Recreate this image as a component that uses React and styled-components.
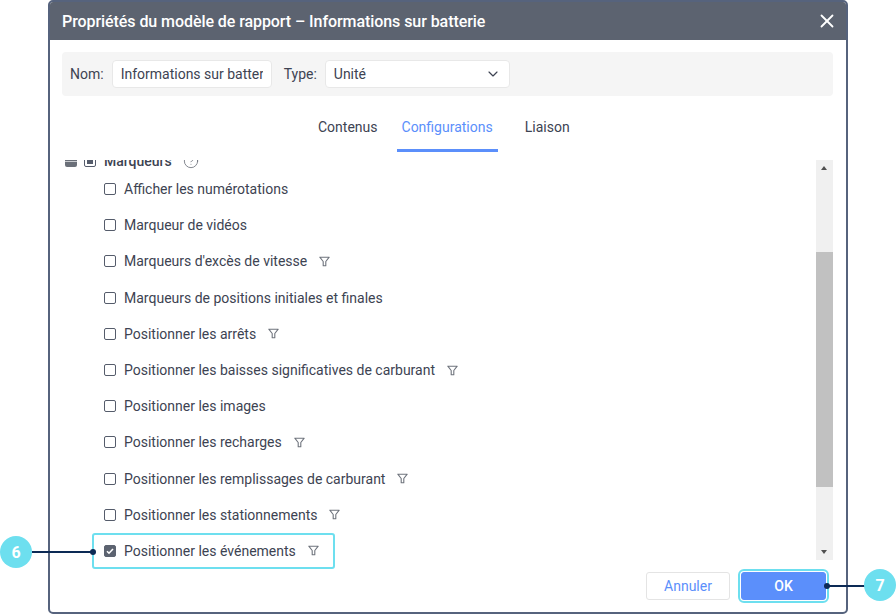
import React from 'react';
import styled, { createGlobalStyle } from 'styled-components';
import { ChevronDown, CircleHelp, X } from 'lucide-react';

const GlobalStyle = createGlobalStyle`
  html, body {
    margin: 0;
    padding: 0;
    background: #fff;
    overflow: hidden;
  }
  * {
    box-sizing: border-box;
  }
`;

const Page = styled.div`
  position: relative;
  width: 896px;
  height: 614px;
  padding-left: 48px;
  font-family: Roboto, "Liberation Sans", sans-serif;
  font-size: 14px;
  color: #3d4352;
`;

const Dialog = styled.div`
  display: flex;
  flex-direction: column;
  width: 800px;
  height: 614px;
  background: #fff;
  border: 2px solid #56637d;
  border-radius: 5px;
  overflow: hidden;
`;

const Header = styled.div`
  display: flex;
  align-items: center;
  justify-content: space-between;
  height: 38px;
  padding: 0 8px 0 12px;
  background: #5c6370;
  color: #fff;
`;

const Title = styled.div`
  font-size: 16px;
  font-weight: 500;
  letter-spacing: -0.07px;
`;

const FieldsBar = styled.div`
  display: flex;
  align-items: center;
  height: 44px;
  margin: 12px 13px 0 12px;
  padding: 0 8px;
  background: #f5f5f5;
  border-radius: 4px;
`;

const FieldLabel = styled.label`
  margin-right: 8px;
`;

const TextInput = styled.input`
  width: 160px;
  height: 28px;
  margin-right: 12px;
  padding: 0 8px;
  font: inherit;
  color: inherit;
  background: #fff;
  border: 1px solid #e8e8e8;
  border-radius: 4px;
  outline: none;
`;

const SelectBox = styled.div`
  display: flex;
  align-items: center;
  justify-content: space-between;
  width: 185px;
  height: 28px;
  padding: 0 8px;
  background: #fff;
  border: 1px solid #e8e8e8;
  border-radius: 4px;
`;

const Tabs = styled.div`
  display: flex;
  gap: 14px;
  margin-top: 23px;
  padding-left: 263px;
`;

const Tab = styled.div`
  padding: 0 5px 14px;
  line-height: 16px;
  color: ${(p) => (p.$active ? '#5b8ffb' : '#3d4352')};
  border-bottom: 3px solid ${(p) => (p.$active ? '#5b8ffb' : 'transparent')};

  &:last-child {
    margin-left: 8px;
  }
`;

const Main = styled.div`
  display: flex;
  height: 410px;
  margin: 8px 13px 0 12px;
`;

const List = styled.div`
  flex: 1;
  overflow: hidden;
`;

const GroupRow = styled.div`
  display: flex;
  align-items: center;
  height: 20px;
  margin-top: -9px;
  padding-left: 3px;
  font-weight: 500;
`;

const ExpandBox = styled.span`
  position: relative;
  width: 12px;
  height: 12px;
  margin-right: 7px;
  background: #6b7079;
  border-radius: 2px;

  &::after {
    content: '';
    position: absolute;
    left: 0;
    right: 0;
    top: 6px;
    height: 1px;
    background: #c9cbcf;
  }
`;

const PartialBox = styled.span`
  display: flex;
  align-items: center;
  justify-content: center;
  width: 12px;
  height: 12px;
  margin-right: 8px;
  border: 1px solid #555c6b;
  border-radius: 2px;

  &::after {
    content: '';
    width: 6px;
    height: 6px;
    background: #555c6b;
  }
`;

const HelpIcon = styled(CircleHelp)`
  margin-left: 11px;
  color: #666b75;
`;

const Row = styled.div`
  display: flex;
  align-items: center;
  height: 36.2px;
  padding-left: 42px;
  ${(p) =>
    p.$highlight &&
    `
    width: fit-content;
    margin-left: 30px;
    padding: 0 14px 0 10px;
    border: 2px solid #6ddfef;
    border-radius: 3px;
  `}
`;

const CheckBox = styled.span`
  display: flex;
  align-items: center;
  justify-content: center;
  width: 12px;
  height: 12px;
  margin-right: 8px;
  background: ${(p) => (p.$checked ? '#5c6370' : '#fff')};
  border: 1px solid ${(p) => (p.$checked ? '#5c6370' : '#555c6b')};
  border-radius: 2px;
`;

const FilterSvg = styled.svg`
  flex: none;
  width: 11px;
  height: 11px;
  margin-left: 12px;
  color: #6f747d;
`;

const Track = styled.div`
  position: relative;
  display: grid;
  grid-template-rows: 92px 235px 1fr;
  width: 17px;
  height: 400px;
  background: #f0f0f0;
`;

const Thumb = styled.div`
  grid-row: 2;
  background: #c1c1c1;
`;

const Arrow = styled.span`
  position: absolute;
  left: 5px;
  ${(p) => (p.$down ? 'bottom: 6px;' : 'top: 6px;')}
  width: 0;
  height: 0;
  border-left: 3.5px solid transparent;
  border-right: 3.5px solid transparent;
  ${(p) => (p.$down ? 'border-top' : 'border-bottom')}: 4px solid #505050;
`;

const Footer = styled.div`
  display: flex;
  justify-content: flex-end;
  gap: 11px;
  margin-top: 2px;
  padding-right: 20px;
`;

const Button = styled.button`
  width: ${(p) => (p.$primary ? '85px' : '84px')};
  height: 28px;
  padding: 0;
  font: inherit;
  font-weight: ${(p) => (p.$primary ? 500 : 400)};
  color: ${(p) => (p.$primary ? '#fff' : '#5b8ffb')};
  background: ${(p) => (p.$primary ? '#5b8ffb' : '#fff')};
  border: 1px solid ${(p) => (p.$primary ? '#5b8ffb' : '#e4e4e4')};
  border-radius: 3px;
  ${(p) => p.$primary && 'outline: 2px solid #6ddfef; outline-offset: 1px;'}
`;

const Badge = styled.div`
  position: absolute;
  top: ${(p) => p.$top}px;
  left: ${(p) => p.$left}px;
  display: flex;
  align-items: center;
  justify-content: center;
  width: 32px;
  height: 32px;
  font-weight: 700;
  font-size: 16px;
  color: #fff;
  background: #6ddfef;
  border-radius: 50%;
`;

const Leader = styled.div`
  position: absolute;
  top: ${(p) => p.$top}px;
  left: ${(p) => p.$left}px;
  width: ${(p) => p.$width}px;
  height: 2px;
  background: #0c2a55;

  &::after {
    content: '';
    position: absolute;
    top: -2px;
    ${(p) => (p.$dotLeft ? 'left: -3px;' : 'right: -3px;')}
    width: 6px;
    height: 6px;
    background: #0c2a55;
    border-radius: 50%;
  }
`;

const FilterIcon = () => (
  <FilterSvg viewBox="0 0 11 11" fill="none" stroke="currentColor" strokeWidth="1.1">
    <path d="M0.8 1.2h9.4L6.8 5.5v4.3H4.2V5.5z" strokeLinejoin="round" />
  </FilterSvg>
);

const rows = [
  { label: 'Afficher les numérotations' },
  { label: 'Marqueur de vidéos' },
  { label: "Marqueurs d'excès de vitesse", filter: true },
  { label: 'Marqueurs de positions initiales et finales' },
  { label: 'Positionner les arrêts', filter: true },
  { label: 'Positionner les baisses significatives de carburant', filter: true },
  { label: 'Positionner les images' },
  { label: 'Positionner les recharges', filter: true },
  { label: 'Positionner les remplissages de carburant', filter: true },
  { label: 'Positionner les stationnements', filter: true },
  { label: 'Positionner les événements', filter: true, checked: true },
];

export default function App() {
  return (
    <Page>
      <GlobalStyle />
      <Dialog>
        <Header>
          <Title>Propriétés du modèle de rapport – Informations sur batterie</Title>
          <X size={22} strokeWidth={2} />
        </Header>
        <FieldsBar>
          <FieldLabel>Nom:</FieldLabel>
          <TextInput readOnly value="Informations sur batterie" />
          <FieldLabel>Type:</FieldLabel>
          <SelectBox>
            Unité
            <ChevronDown size={16} strokeWidth={1.75} />
          </SelectBox>
        </FieldsBar>
        <Tabs>
          <Tab>Contenus</Tab>
          <Tab $active>Configurations</Tab>
          <Tab>Liaison</Tab>
        </Tabs>
        <Main>
          <List>
            <GroupRow>
              <ExpandBox />
              <PartialBox />
              Marqueurs
              <HelpIcon size={16} strokeWidth={1.2} />
            </GroupRow>
            {rows.map((row) => (
              <Row key={row.label} $highlight={row.checked}>
                <CheckBox $checked={row.checked}>
                  {row.checked && (
                    <svg width="8" height="8" viewBox="0 0 8 8" fill="none" stroke="#fff" strokeWidth="1.6">
                      <path d="M1 4.2l2 2 4-4.2" />
                    </svg>
                  )}
                </CheckBox>
                {row.label}
                {row.filter && <FilterIcon />}
              </Row>
            ))}
          </List>
          <Track>
            <Arrow />
            <Thumb />
            <Arrow $down />
          </Track>
        </Main>
        <Footer>
          <Button>Annuler</Button>
          <Button $primary>OK</Button>
        </Footer>
      </Dialog>
      <Badge $top={536} $left={0}>6</Badge>
      <Leader $top={551} $left={32} $width={61} />
      <Leader $top={585} $left={827} $width={38} $dotLeft />
      <Badge $top={569} $left={864}>7</Badge>
    </Page>
  );
}
